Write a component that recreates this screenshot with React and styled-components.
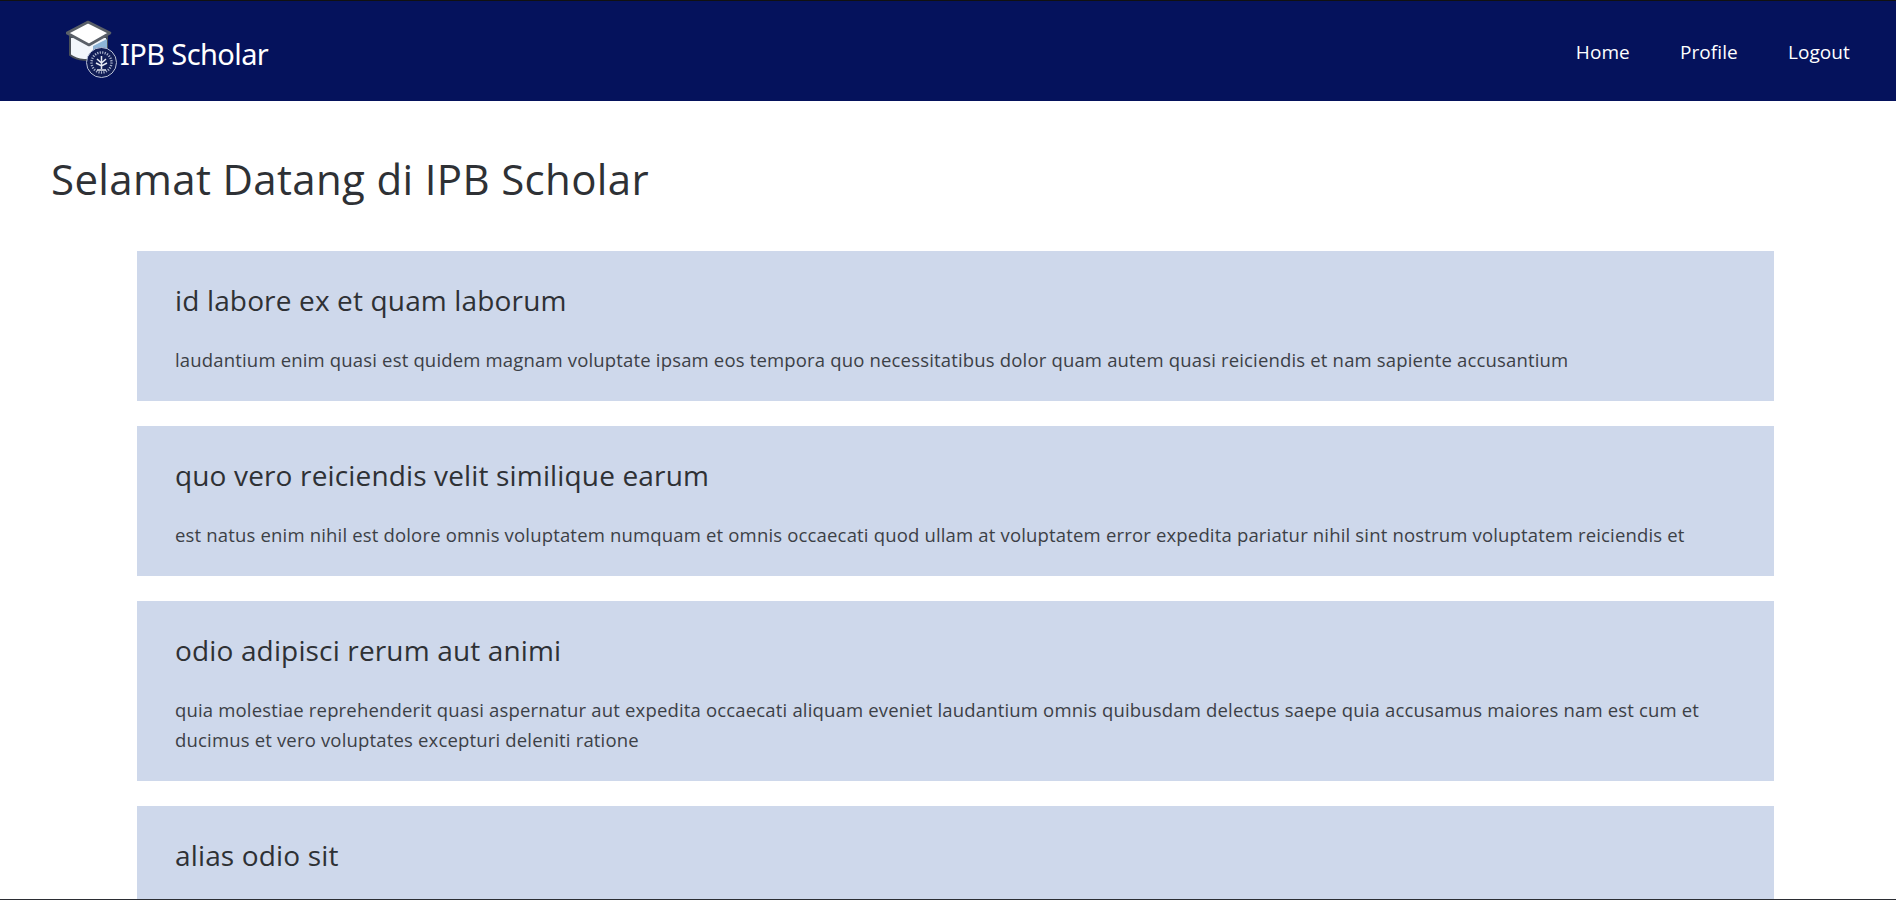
import React from 'react'
import styled, { createGlobalStyle } from 'styled-components'

// the last card runs off the bottom of the window, its body is not visible
const posts = [
  {
    title: 'id labore ex et quam laborum',
    body: 'laudantium enim quasi est quidem magnam voluptate ipsam eos tempora quo necessitatibus dolor quam autem quasi reiciendis et nam sapiente accusantium',
  },
  {
    title: 'quo vero reiciendis velit similique earum',
    body: 'est natus enim nihil est dolore omnis voluptatem numquam et omnis occaecati quod ullam at voluptatem error expedita pariatur nihil sint nostrum voluptatem reiciendis et',
  },
  {
    title: 'odio adipisci rerum aut animi',
    body: 'quia molestiae reprehenderit quasi aspernatur aut expedita occaecati aliquam eveniet laudantium omnis quibusdam delectus saepe quia accusamus maiores nam est cum et ducimus et vero voluptates excepturi deleniti ratione',
  },
  {
    title: 'alias odio sit',
  },
]

const LogoMark = () => (
  <svg width="52" height="60" viewBox="0 0 52 60">
    <path d="M4 17 V35 C12 41 24 41 32 38 L41 30 V17 Z" fill="#f2f6fb" stroke="#4a5058" strokeWidth="2" />
    <path d="M27 26 L41 19 V32 L27 34 Z" fill="#8db5d8" />
    <path d="M1 13 L22 2 L44 13 L23 25 Z" fill="#ffffff" stroke="#5a6068" strokeWidth="2.6" strokeLinejoin="round" />
    <circle cx="35.5" cy="42.5" r="15" fill="#111d56" stroke="#b9c0d6" strokeWidth="1" />
    <circle cx="35.5" cy="42.5" r="10" fill="none" stroke="#aab2cc" strokeWidth="2.4" strokeDasharray="1.2 1.3" />
    <path d="M35.5 36 V49 M31 39 L35.5 43 L40 39 M30 43 L35.5 46 L41 43 M31 50 H40" stroke="#e6e9f2" strokeWidth="1.5" fill="none" />
  </svg>
)

const App = () => {
  return (
    <>
      <GlobalStyle />
      <Page>
        <Navbar>
          <Brand>
            <LogoMark />
            <BrandName>IPB Scholar</BrandName>
          </Brand>
          <NavLinks>
            <NavLink href="#">Home</NavLink>
            <NavLink href="#">Profile</NavLink>
            <NavLink href="#">Logout</NavLink>
          </NavLinks>
        </Navbar>
        <Main>
          <Heading>Selamat Datang di IPB Scholar</Heading>
          <PostList>
            {posts.map((post) => (
              <PostCard key={post.title}>
                <PostTitle>{post.title}</PostTitle>
                {post.body && <PostBody>{post.body}</PostBody>}
              </PostCard>
            ))}
          </PostList>
        </Main>
        <BottomEdge />
      </Page>
    </>
  )
}

export default App

const GlobalStyle = createGlobalStyle`
  * {
    box-sizing: border-box;
  }
  body {
    margin: 0;
    background: #fff;
    font-family: "Open Sans", "Noto Sans", sans-serif;
    color: #2e3135;
  }
`

const Page = styled.div`
  height: 100vh;
  display: flex;
  flex-direction: column;
  overflow: hidden;
`

const Navbar = styled.nav`
  flex: none;
  height: 101px;
  border-top: 1px solid #111;
  background: #05125c;
  display: flex;
  align-items: center;
  justify-content: space-between;
  padding: 0 46px 0 66px;
`

const Brand = styled.div`
  display: flex;
  align-items: center;
  margin-top: -2px;
`

const BrandName = styled.span`
  margin-left: 2px;
  margin-top: 6px;
  color: #fff;
  font-family: "Noto Sans", sans-serif;
  font-size: 29px;
  letter-spacing: -0.6px;
  white-space: nowrap;
`

const NavLinks = styled.div`
  display: flex;
  gap: 50px;
  padding-top: 2px;
`

const NavLink = styled.a`
  color: #fff;
  font-size: 19px;
  letter-spacing: 0.1px;
  text-decoration: none;
`

const Main = styled.main`
  flex: 1;
  min-height: 0;
  overflow: hidden;
  padding: 48px 51px 0;
`

const Heading = styled.h1`
  margin: 0 0 42px;
  font-size: 42px;
  font-weight: 400;
  line-height: 60px;
  letter-spacing: 0.35px;
`

const PostList = styled.div`
  display: flex;
  flex-direction: column;
  gap: 25px;
  margin: 0 71px 0 86px;
`

const PostCard = styled.article`
  background: #ced8eb;
  padding: 31px 38px 26px;
`

const PostTitle = styled.h3`
  margin: 0 0 27px;
  font-size: 28px;
  font-weight: 400;
  line-height: 36px;
  letter-spacing: 0.15px;
`

const PostBody = styled.p`
  margin: 0;
  font-size: 18.5px;
  line-height: 30px;
  letter-spacing: 0.17px;
  color: #3c4046;
`

const BottomEdge = styled.div`
  flex: none;
  height: 1px;
  background: #2b2d33;
`
